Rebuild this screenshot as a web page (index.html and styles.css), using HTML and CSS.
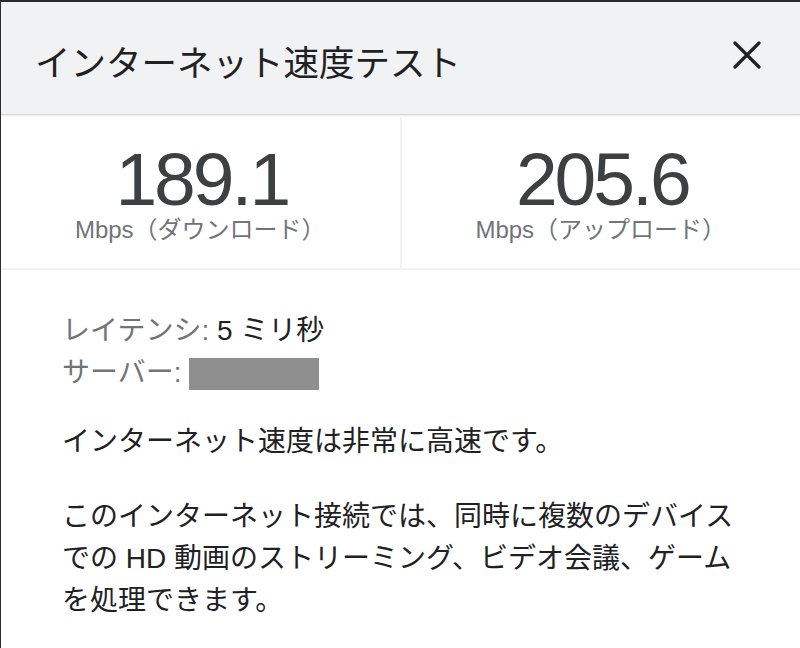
FILE: index.html
```html
<!DOCTYPE html>
<html lang="ja">
<head>
<meta charset="utf-8">
<title>インターネット速度テスト</title>
<link rel="stylesheet" href="styles.css">
</head>
<body>
<div class="dialog">
  <header class="header">
    <h1 class="title">インターネット速度テスト</h1>
    <button class="close" aria-label="閉じる">
      <svg width="28" height="28" viewBox="0 0 28 28"><path d="M2 2 L26 26 M26 2 L2 26" stroke="#202124" stroke-width="3.2" stroke-linecap="round" fill="none"/></svg>
    </button>
  </header>
  <section class="stats">
    <div class="stat">
      <div class="value">189.1</div>
      <div class="unit">Mbps（ダウンロード）</div>
    </div>
    <div class="stat">
      <div class="value">205.6</div>
      <div class="unit">Mbps（アップロード）</div>
    </div>
  </section>
  <section class="details">
    <div class="meta">
      <div class="meta-row"><span class="label">レイテンシ:</span> <span class="val">5 ミリ秒</span></div>
      <div class="meta-row"><span class="label">サーバー:</span> <span class="redact"></span></div>
    </div>
    <p class="para first">インターネット速度は非常に高速です。</p>
    <p class="para">このインターネット接続では、同時に複数のデバイス<br>での HD 動画のストリーミング、ビデオ会議、ゲーム<br>を処理できます。</p>
  </section>
</div>
</body>
</html>
```
FILE: styles.css
```css
html, body {
  margin: 0;
  padding: 0;
  height: 100%;
}
body {
  background: #2b2b2b;
  font-family: "Liberation Sans", "Noto Sans CJK JP", sans-serif;
  overflow: hidden;
}
.dialog {
  margin: 2px 0 0 1px;
  background: #ffffff;
  height: 646px;
  overflow: hidden;
}
.header {
  height: 113px;
  box-sizing: border-box;
  background: #f1f2f4;
  border-bottom: 1px solid #d6d7d9;
  box-shadow: 0 1px 2px rgba(0,0,0,0.08);
  display: flex;
  align-items: center;
  justify-content: space-between;
  padding: 12px 39px 0 34px;
  position: relative;
}
.title {
  margin: 0;
  font-weight: normal;
  font-size: 35.5px;
  line-height: 36px;
  color: #202124;
}
.close {
  border: 0;
  background: none;
  padding: 0;
  margin-top: -18px;
  width: 28px;
  height: 28px;
  display: flex;
}
.stats {
  display: flex;
  border-bottom: 2px solid #f1f3f4;
  margin-top: 2px;
}
.stat {
  flex: 1;
  display: flex;
  flex-direction: column;
  align-items: center;
  padding: 26px 0 23px;
}
.stat + .stat {
  border-left: 2px solid #f1f3f4;
}
.value {
  font-size: 75px;
  line-height: 72px;
  letter-spacing: -3px;
  color: #3c4043;
  margin-right: -3px;
}
.unit {
  font-size: 24px;
  line-height: 30px;
  color: #70757a;
  margin-top: 0;
}
.details {
  padding: 40px 30px 0 61px;
  color: #202124;
  font-size: 28px;
}
.meta-row {
  line-height: 42px;
  height: 42px;
}
.label {
  color: #70757a;
}
.redact {
  display: inline-block;
  width: 130px;
  height: 32px;
  background: #8f8f8f;
  vertical-align: -8px;
}
.para {
  margin: 27px 0 0;
  line-height: 42px;
  white-space: nowrap;
}
.para + .para {
  margin-top: 33px;
}
```
